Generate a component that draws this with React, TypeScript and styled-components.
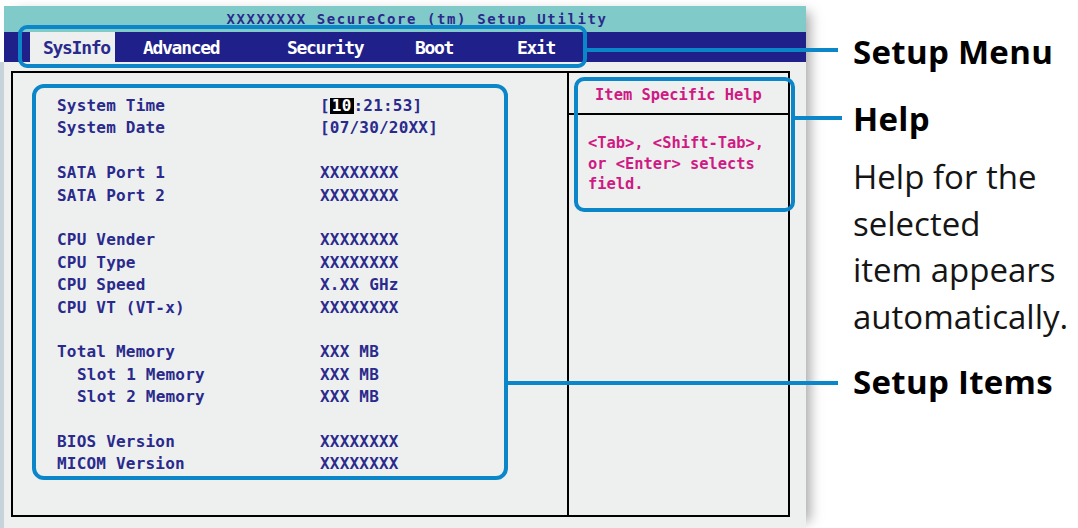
import React from 'react'
import styled, { createGlobalStyle } from 'styled-components'

const BIOS_FONT = `'DejaVu Sans Mono', 'Liberation Mono', monospace`
const NAVY = '#2a2a8c'
const CALLOUT = '#0b87c9'
const SCREEN_BG = '#eef0f0'
const RULE = '#000'

const GlobalStyle = createGlobalStyle`
  * { box-sizing: border-box; }
  html, body {
    margin: 0;
    padding: 0;
    background: #fff;
    overflow: hidden;
  }
`

const Page = styled.div`
  position: relative;
  width: 1078px;
  height: 528px;
  display: flex;
  background: #fff;
  overflow: hidden;
`

const Screen = styled.div`
  width: 806px;
  height: 522px;
  margin-top: 6px;
  flex-shrink: 0;
  display: flex;
  flex-direction: column;
  box-shadow: 10px 0 12px -6px rgba(0, 0, 0, 0.35);
`

const TitleBar = styled.div`
  height: 26px;
  margin-left: 4px;
  padding: 3px 0 0 24px;
  background: #80caca;
  display: flex;
  justify-content: center;
`

const TitleText = styled.div`
  height: 18px;
  overflow: hidden;
  font-family: ${BIOS_FONT};
  font-weight: 700;
  font-size: 14px;
  line-height: 21px;
  letter-spacing: 1.6px;
  color: ${NAVY};
  white-space: pre;
`

const MenuBar = styled.div`
  height: 30px;
  margin-left: 4px;
  padding-left: 26px;
  background: #20208a;
  display: flex;
`

const Tab = styled.div<{ $w?: number; $active?: boolean; $gap?: number }>`
  width: ${p => (p.$w ? `${p.$w}px` : 'auto')};
  margin-right: ${p => p.$gap ?? 0}px;
  padding-left: 13px;
  display: flex;
  align-items: center;
  font-family: ${BIOS_FONT};
  font-weight: 700;
  font-size: 18px;
  letter-spacing: -1.3px;
  color: ${p => (p.$active ? NAVY : '#fff')};
  background: ${p => (p.$active ? SCREEN_BG : 'transparent')};
`

const Body = styled.div`
  flex: 1;
  background: ${SCREEN_BG};
  border-left: 4px solid #c6d3da;
  padding: 9px 0 0 7px;
`

const Frame = styled.div`
  width: 779px;
  height: 446px;
  border: 2px solid ${RULE};
  display: grid;
  grid-template-columns: 554px 1fr;
`

const ItemsPanel = styled.div`
  padding: 22px 0 0 44px;
`

const Group = styled.div`
  & + & {
    margin-top: 22.4px;
  }
`

const Row = styled.div`
  display: grid;
  grid-template-columns: 263px auto;
  height: 22.4px;
  align-items: center;
  font-family: ${BIOS_FONT};
  font-weight: 700;
  font-size: 16px;
  line-height: 22.4px;
  letter-spacing: 0.2px;
  color: ${NAVY};
  white-space: pre;
`

const Label = styled.span<{ $indent?: boolean }>`
  padding-left: ${p => (p.$indent ? 20 : 0)}px;
`

const Cursor = styled.span`
  display: inline-block;
  padding: 0 2px;
  line-height: 16px;
  background: #000;
  color: #fff;
`

const HelpPanel = styled.div`
  border-left: 2px solid ${RULE};
  display: flex;
  flex-direction: column;
`

const HelpHeader = styled.div`
  height: 42px;
  padding-top: 12px;
  border-bottom: 2px solid ${RULE};
  text-align: center;
  font-family: ${BIOS_FONT};
  font-weight: 700;
  font-size: 15.4px;
  line-height: 20px;
  color: #cf1a84;
`

const HelpBody = styled.div`
  padding: 18px 0 0 19px;
  font-family: ${BIOS_FONT};
  font-weight: 700;
  font-size: 15.4px;
  line-height: 20.7px;
  color: #cf1a84;
  white-space: pre;
`

const Notes = styled.div`
  margin-left: 47px;
  padding-top: 28.8px;
  font-family: 'Open Sans', 'Noto Sans', sans-serif;
  font-size: 33px;
  line-height: 46.7px;
  color: #151515;
  white-space: nowrap;
`

const NoteTitle = styled.div<{ $gap?: number }>`
  margin-top: ${p => p.$gap ?? 0}px;
  font-weight: 700;
  color: #000;
  letter-spacing: 0.3px;
`

const NoteText = styled.div<{ $gap?: number }>`
  margin-top: ${p => p.$gap ?? 0}px;
  font-weight: 400;
`

const CalloutBox = styled.div<{ $x: number; $y: number; $w: number; $h: number; $r: number }>`
  position: absolute;
  left: ${p => p.$x}px;
  top: ${p => p.$y}px;
  width: ${p => p.$w}px;
  height: ${p => p.$h}px;
  border: 4px solid ${CALLOUT};
  border-radius: ${p => p.$r}px;
  pointer-events: none;
`

const Leader = styled.div<{ $x1: number; $x2: number; $y: number }>`
  position: absolute;
  left: ${p => p.$x1}px;
  top: ${p => p.$y - 2}px;
  width: ${p => p.$x2 - p.$x1}px;
  height: 4px;
  background: ${CALLOUT};
  pointer-events: none;
`

type Item = { label: string; value: React.ReactNode; indent?: boolean }

const time = (
  <span>
    [<Cursor>10</Cursor>:21:53]
  </span>
)

const groups: Item[][] = [
  [
    { label: 'System Time', value: time },
    { label: 'System Date', value: '[07/30/20XX]' },
  ],
  [
    { label: 'SATA Port 1', value: 'XXXXXXXX' },
    { label: 'SATA Port 2', value: 'XXXXXXXX' },
  ],
  [
    { label: 'CPU Vender', value: 'XXXXXXXX' },
    { label: 'CPU Type', value: 'XXXXXXXX' },
    { label: 'CPU Speed', value: 'X.XX GHz' },
    { label: 'CPU VT (VT-x)', value: 'XXXXXXXX' },
  ],
  [
    { label: 'Total Memory', value: 'XXX MB' },
    { label: 'Slot 1 Memory', value: 'XXX MB', indent: true },
    { label: 'Slot 2 Memory', value: 'XXX MB', indent: true },
  ],
  [
    { label: 'BIOS Version', value: 'XXXXXXXX' },
    { label: 'MICOM Version', value: 'XXXXXXXX' },
  ],
]

const tabs = [
  { name: 'SysInfo', w: 85, gap: 15, active: true },
  { name: 'Advanced', w: 144 },
  { name: 'Security', w: 128 },
  { name: 'Boot', w: 102 },
  { name: 'Exit' },
]

export default function App() {
  return (
    <>
      <GlobalStyle />
      <Page>
        <Screen>
          <TitleBar>
            <TitleText>XXXXXXXX SecureCore (tm) Setup Utility</TitleText>
          </TitleBar>
          <MenuBar>
            {tabs.map(t => (
              <Tab key={t.name} $w={t.w} $gap={t.gap} $active={t.active}>
                {t.name}
              </Tab>
            ))}
          </MenuBar>
          <Body>
            <Frame>
              <ItemsPanel>
                {groups.map((g, i) => (
                  <Group key={i}>
                    {g.map(item => (
                      <Row key={item.label}>
                        <Label $indent={item.indent}>{item.label}</Label>
                        <span>{item.value}</span>
                      </Row>
                    ))}
                  </Group>
                ))}
              </ItemsPanel>
              <HelpPanel>
                <HelpHeader>Item Specific Help</HelpHeader>
                <HelpBody>
                  {'<Tab>, <Shift-Tab>,\nor <Enter> selects\nfield.'}
                </HelpBody>
              </HelpPanel>
            </Frame>
          </Body>
        </Screen>

        <Notes>
          <NoteTitle>Setup Menu</NoteTitle>
          <NoteTitle $gap={20.3}>Help</NoteTitle>
          <NoteText $gap={11.3}>
            Help for the
            <br />
            selected
            <br />
            item appears
            <br />
            automatically.
          </NoteText>
          <NoteTitle $gap={18.2}>Setup Items</NoteTitle>
        </Notes>

        <CalloutBox $x={18} $y={25} $w={569} $h={43} $r={9} />
        <Leader $x1={587} $x2={838} $y={50} />
        <CalloutBox $x={574} $y={77} $w={221} $h={135} $r={10} />
        <Leader $x1={795} $x2={842} $y={118} />
        <CalloutBox $x={32} $y={84} $w={476} $h={396} $r={12} />
        <Leader $x1={508} $x2={838} $y={383} />
      </Page>
    </>
  )
}
